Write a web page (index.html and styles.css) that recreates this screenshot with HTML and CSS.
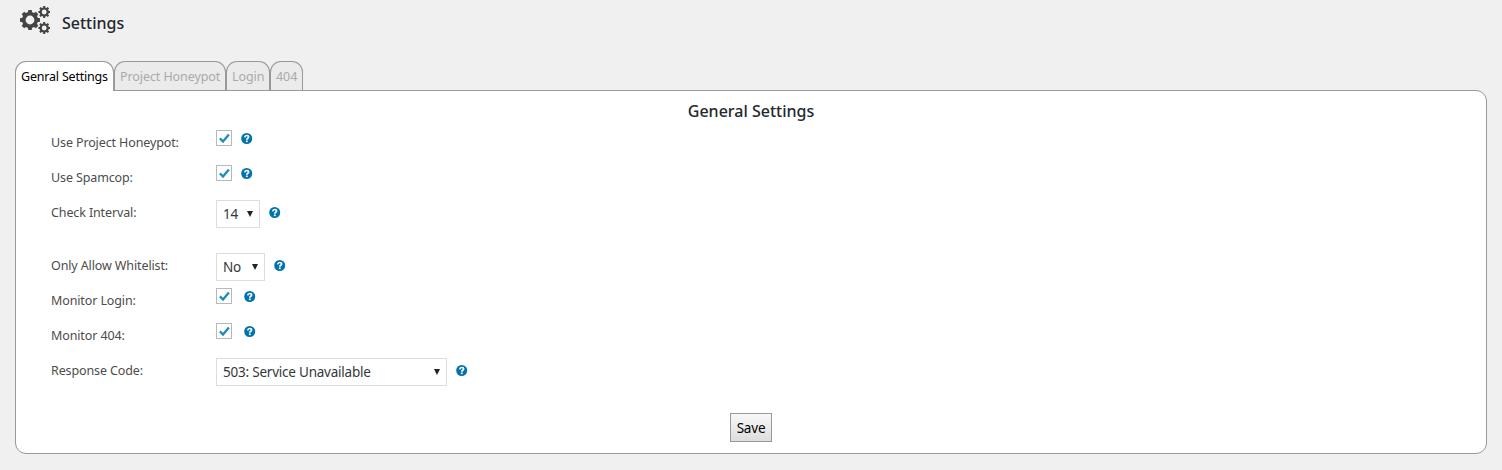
FILE: index.html
```html
<!DOCTYPE html>
<html lang="en">
<head>
<meta charset="utf-8">
<title>Settings</title>
<link rel="stylesheet" href="styles.css">
</head>
<body>
<svg class="defs" width="0" height="0">
  <symbol id="gear" viewBox="-10 -10 20 20">
    <circle r="6.2" fill="none" stroke="currentColor" stroke-width="3.6"/>
    <g fill="currentColor">
      <path id="tooth" d="M-2.3-7 -1.7-10H1.7L2.3-7Z"/>
      <use href="#tooth" transform="rotate(45)"/><use href="#tooth" transform="rotate(90)"/>
      <use href="#tooth" transform="rotate(135)"/><use href="#tooth" transform="rotate(180)"/>
      <use href="#tooth" transform="rotate(225)"/><use href="#tooth" transform="rotate(270)"/>
      <use href="#tooth" transform="rotate(315)"/>
    </g>
  </symbol>
  <symbol id="minigear" viewBox="-10 -10 20 20">
    <circle r="5.8" fill="none" stroke="currentColor" stroke-width="3.6"/>
    <g fill="currentColor">
      <path id="cog" d="M-2.1-6 -1.6-10H1.6L2.1-6Z"/>
      <use href="#cog" transform="rotate(45)"/><use href="#cog" transform="rotate(90)"/>
      <use href="#cog" transform="rotate(135)"/><use href="#cog" transform="rotate(180)"/>
      <use href="#cog" transform="rotate(225)"/><use href="#cog" transform="rotate(270)"/>
      <use href="#cog" transform="rotate(315)"/>
    </g>
  </symbol>
  <symbol id="help" viewBox="0 0 12 12">
    <circle cx="5.7" cy="5.5" r="5.5" fill="#0073aa"/>
    <path d="M3.7 4.3C3.9 3 4.7 2.5 5.7 2.5S7.6 3.1 7.6 4.1C7.6 5.3 5.8 5.3 5.8 6.7" fill="none" stroke="#fff" stroke-width="1.7"/>
    <path d="M4.9 7.5h1.8v1.6H4.9z" fill="#fff"/>
  </symbol>
  <symbol id="check" viewBox="0 0 16 16">
    <path d="M3.9 8.4 7 11.6 12.9 4.4" fill="none" stroke="#1e8cbe" stroke-width="2.3"/>
  </symbol>
</svg>
<header class="page-head">
  <svg class="gears" viewBox="0 0 30 30">
    <use href="#gear" x="0" y="4" width="20" height="20"/>
    <use href="#minigear" x="18.2" y="0" width="12" height="12"/>
    <use href="#minigear" x="18.2" y="16" width="12" height="12"/>
  </svg>
  <h1 class="page-title">Settings</h1>
</header>
<nav class="tabs">
  <a class="tab active">Genral Settings</a>
  <a class="tab tab-honeypot">Project Honeypot</a>
  <a class="tab tab-login">Login</a>
  <a class="tab tab-404">404</a>
</nav>
<main class="panel">
  <h2 class="panel-title">General Settings</h2>
  <div class="rows">
    <div class="row"><span class="label">Use Project Honeypot:</span><span class="checkbox"><svg><use href="#check"/></svg></span><svg class="help near"><use href="#help"/></svg></div>
    <div class="row"><span class="label">Use Spamcop:</span><span class="checkbox"><svg><use href="#check"/></svg></span><svg class="help near"><use href="#help"/></svg></div>
    <div class="row tall"><span class="label">Check Interval:</span><span class="select w-num"><span>14</span><i class="arrow"></i></span><svg class="help low"><use href="#help"/></svg></div>
    <div class="row"><span class="label">Only Allow Whitelist:</span><span class="select w-no"><span>No</span><i class="arrow"></i></span><svg class="help low"><use href="#help"/></svg></div>
    <div class="row"><span class="label">Monitor Login:</span><span class="checkbox"><svg><use href="#check"/></svg></span><svg class="help far"><use href="#help"/></svg></div>
    <div class="row"><span class="label">Monitor 404:</span><span class="checkbox"><svg><use href="#check"/></svg></span><svg class="help far"><use href="#help"/></svg></div>
    <div class="row"><span class="label">Response Code:</span><span class="select w-code"><span>503: Service Unavailable</span><i class="arrow"></i></span><svg class="help low"><use href="#help"/></svg></div>
  </div>
  <button class="save">Save</button>
</main>
</body>
</html>
```
FILE: styles.css
```css
* { box-sizing: border-box; }
body {
  margin: 0;
  height: 470px;
  padding: 0 15px;
  overflow: hidden;
  background: #f0f0f0;
  color: #4c4c4c;
  font: 12.5px/20px "Noto Sans", "Open Sans", sans-serif;
}
.defs { position: absolute; }
.page-head { display: flex; height: 61px; padding: 6px 0 0 5px; color: #444; }
.gears { width: 30px; height: 30px; }
.page-title {
  margin: 5px 0 0 12px;
  font-size: 16px;
  font-weight: 500;
  line-height: 24px;
  color: #23282d;
}
.tabs { display: flex; height: 29px; }
.tab {
  height: 29px;
  padding: 5px 0 0 5px;
  border: 1px solid #999;
  border-bottom: 0;
  border-radius: 11px 11px 0 0;
  background: #ebebeb;
  color: #aaa;
  letter-spacing: -0.08px;
  white-space: nowrap;
}
.tab.active {
  position: relative;
  width: 99px;
  height: 30px;
  background: #fff;
  color: #000;
  letter-spacing: -0.2px;
}
.tab-honeypot { width: 112px; }
.tab-login { width: 44px; }
.tab-404 { width: 33px; }
.panel {
  display: flex;
  flex-direction: column;
  height: 364px;
  border: 1px solid #999;
  border-radius: 0 11px 11px 11px;
  background: #fff;
}
.panel-title {
  margin: 8px 0 7px;
  text-align: center;
  font-size: 16px;
  font-weight: 500;
  line-height: 24px;
  color: #23282d;
}
.rows { padding-left: 35px; }
.row { display: flex; height: 35px; align-items: flex-start; }
.row.tall { height: 53px; }
.label { width: 165px; padding-top: 3px; letter-spacing: -0.12px; }
.checkbox { width: 16px; height: 16px; border: 1px solid #b4b9be; background: #fff; }
.checkbox svg { display: block; width: 16px; height: 16px; margin: -1px; }
.help { width: 12px; height: 12px; margin-left: 9px; }
.help.near { margin: 3px 0 0 9px; }
.help.far { margin: 3px 0 0 12px; }
.help.low { margin-top: 7px; }
.select {
  display: flex;
  justify-content: space-between;
  align-items: center;
  height: 28px;
  padding: 0 6px;
  border: 1px solid #ddd;
  color: #32373c;
  font-size: 13.5px;
  letter-spacing: -0.22px;
}
.w-num { width: 44px; }
.w-no { width: 49px; }
.w-code { width: 231px; }
.arrow { border: 3px solid transparent; border-top: 6px solid #222; border-bottom: 0; }
.save {
  align-self: center;
  width: 42px;
  height: 29px;
  margin-top: 20px;
  padding: 0;
  border: 1px solid #999;
  border-radius: 0;
  background: linear-gradient(#f8f8f8, #ddd);
  color: #000;
  font: 13.5px/20px "Noto Sans", "Open Sans", sans-serif;
  letter-spacing: -0.2px;
}
```
